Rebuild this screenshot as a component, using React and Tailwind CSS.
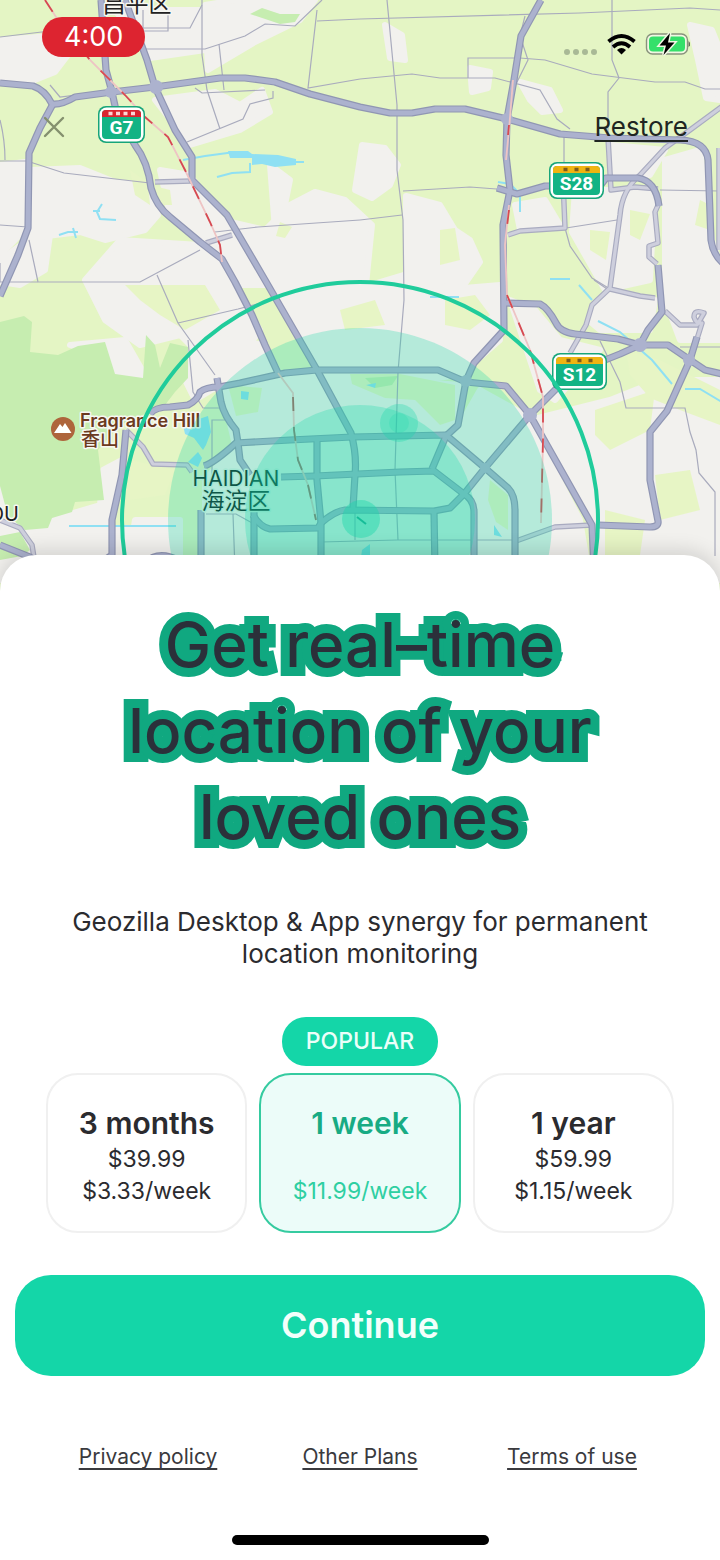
import { useState } from 'react';

const plans = [
  { id: 'quarter', title: '3 months', price: '$39.99', weekly: '$3.33/week' },
  { id: 'week', title: '1 week', price: '', weekly: '$11.99/week', popular: true },
  { id: 'year', title: '1 year', price: '$59.99', weekly: '$1.15/week' },
];

const footerLinks = ['Privacy policy', 'Other Plans', 'Terms of use'];

// Motorways and ring roads
const highways = [
  'M0 83L33 86Q45 90 52 104Q62 105 75 97L112 92L155 87L220 78L245 78L275 82L310 94L360 107L390 113H412L435 109H465L507 119L560 134L610 138L680 140Q706 141 708 160L711 240Q713 255 724 264',
  'M54 102L40 128L29 153L28 228L18 255L0 296',
  'M101 0L106 70L112 92L117 115L135 145Q148 162 151 188Q156 206 170 217L200 242L222 259L235 282L252 315L265 345L278 373',
  'M125 0L147 60L155 87L175 130L192 157V180L227 215L265 280L317 370L351 433Q357 455 355 475L353 508',
  'M541 0L521 36L514 80L507 119L506 155L510 190L503 225L504 330L474 363L466 381L458 425L446 436L432 469',
  'M150 414Q155 407 170 407L188 405Q198 400 200 392Q206 387 219 387L240 383L285 373L317 370H438L466 382L506 386L530 415L592 525L594 570',
  'M530 415L558 387L590 366L620 354L640 345L668 345L690 360L705 370L722 374',
  'M217 378L221 402Q224 416 236 430L238 443L240 460L250 475',
  'M204 466Q214 463 236 443L290 440L352 437L446 435L485 468L508 488Q515 495 515 510V570',
  'M281 477L315 476L400 472L434 471L464 494Q474 500 474 512V570',
  'M530 415L485 468L464 494L450 508L434 511L345 510Q335 511 321 523L318 528L270 529Q260 527 253 515',
  'M317 441V480L321 523V570',
  'M254 510V570',
  'M434 511L435 570',
  'M201 510V570',
  'M126 430L122 475L112 520V555L90 570',
  'M145 563Q158 550 178 560',
  'M504 303L540 304Q548 308 556 323Q560 332 575 334L618 339L640 345L648 330L662 312L658 265',
  'M497 188L517 194L545 186H600L606 178H638Q656 181 659 206',
  'M697 337L690 360L667 411L650 432L650 480L658 521Q659 527 650 527L598 525',
  'M0 545L30 557L60 580',
];

const secondary = [
  'M126 430L143 447L153 464L187 465L192 472',
  'M724 105L690 130L665 148L640 175Q622 190 620 215L610 288L592 305L586 325L570 353',
  'M608 138L611 190L635 187L658 189',
  'M508 235L520 231L565 228L563 180',
  'M659 203L655 212L658 243L649 246V257L657 264',
  'M610 289L640 296L655 298',
  'M665 311L680 325H697L704 313Q694 309 694 317Q696 324 702 323L697 339',
  'M516 541L555 527L592 525',
  'M719 148V250',
  'M155 182L192 181',
  'M206 243L232 235',
  'M0 520L20 528L32 545L36 570',
];

const streets = [
  'M0 37L75 28H190L202 5M143 10V31H168V12',
  'M145 49L205 49L245 36L265 24L295 26L322 0',
  'M202 0V55L207 90L220 129M219 44L224 90M195 88L202 93L265 90M273 91V98L250 104L243 119L187 142',
  'M317 10L308 88L360 79M317 21L360 19',
  'M0 161H27L64 173L150 183M0 225L28 227M29 240L38 282',
  'M0 282H140L200 250M157 275L178 323L215 375M178 323L238 309L261 303M188 340L193 392L203 408H220',
  'M215 232L258 227L360 220',
  'M387 0L397 105L397 170L403 220L404 300L398 372L395 470L398 540',
  'M360 19L580 13L690 8L720 10',
  'M360 79L412 74L440 78H495L540 90L557 119L570 129',
  'M468 78V58H520L545 60L592 74L655 82H685L705 89H720M525 16L520 36L528 60L516 84',
  'M612 0V60L619 78L608 92V140M403 191L470 187L510 190M660 190L720 191',
  'M360 220L402 215M564 136V178M566 228L617 220M565 228L570 246L592 278L610 289',
  'M600 341L620 382L626 408H685L690 432L696 450L699 473L715 492V556',
  'M594 280L610 291M680 347H720',
  'M212 485V420H233M206 514L236 514L254 524M233 514L235 570',
  'M321 542L397 540L515 540M355 510V540',
  'M50 85L60 97L107 91M0 120Q5 140 5 160M0 263V282',
];

const land = [
  'M0 40L50 36L68 55L55 72L30 82H0Z',
  'M115 10H200L205 50L150 58Z',
  'M205 5L235 0H315L300 20L255 42L208 70Z',
  'M155 100L215 92L240 105L262 90L270 112L240 130L190 145Z',
  'M0 165L25 162V230L0 255Z',
  'M30 170L80 168L115 182L148 185L158 215L145 230L105 240L80 232L30 238Z',
  'M160 170L190 175L222 220L265 230L290 205L315 192L345 200L372 225L366 285H235L200 240L170 215Z',
  'M270 165L290 180L285 205L300 225L275 230Z',
  'M28 240L50 235L45 270L20 285L0 282V260Z',
  'M120 240L200 245L230 282L260 330L225 380L180 335L140 345L105 320L85 280Z',
  'M265 280L370 285L420 270L440 290L500 285V340L460 375L420 380L320 370Z',
  'M385 25L402 35L405 60L390 58Z',
  'M470 68L490 72L488 88L472 92Z',
  'M520 82L550 90L560 110L542 112L530 100Z',
  'M690 25L712 30L720 50V100L706 98L698 60Z',
  'M362 145L385 148L398 165L390 185L372 198L355 190Z',
  'M406 196L440 205L455 230L470 240L480 262L462 288L430 285L406 300Z',
  'M515 205L545 200L560 225L520 230Z',
  'M612 145L665 150L650 175L615 178Z',
  'M575 190L655 190L650 280L605 290L572 232Z',
  'M665 160L700 150L712 240L720 265V340L680 340L665 300Z',
  'M510 300L535 310L560 340L600 350L555 400L540 390Z',
  'M530 420L610 400L660 380L720 380V580H600L590 520Z',
  'M610 290L655 300L650 330L600 330L588 320Z',
  'M125 340L145 375V378L115 376L100 355L70 345Z',
  'M103 470L122 460L112 520V580H30L50 520L100 505Z',
  'M135 520L180 520V580H125Z',
  'M0 485H12L8 512L40 530H140V580H0Z',
  'M200 335L265 345L280 375L220 385L195 400L180 370Z',
  'M222 390L285 376L320 374L460 385L460 425L480 390L525 415L580 520L590 580H205V480L235 445Z',
];

const grass = [
  'M125 285H205L220 310L185 330L160 315L140 300Z',
  'M130 170L148 183L150 205L135 195Z',
  'M280 222L292 227L285 238L276 236Z',
  'M445 300L475 295L490 315L470 330L445 325Z',
  'M595 410L655 390L650 430L610 450L595 435Z',
  'M655 475L690 470L700 510L660 520Z',
  'M605 510L645 520L640 555L605 560Z',
  'M440 230L455 228L460 260L440 265Z',
  'M590 230L610 232L606 260L590 250Z',
  'M630 210L650 214L640 240L630 235Z',
  'M700 200L710 205V230L695 225Z',
  'M626 350L660 360L720 390V425L680 410L650 398L630 375Z',
  'M150 185L170 190L172 205L158 205Z',
  'M340 310L375 300L385 325L345 330Z',
  'M130 460L175 470L165 495L130 500Z',
  'M350 374H400L455 385V420L440 425L415 400L385 398L352 384Z',
  'M228 385L262 388L258 412L236 416Z',
  'M490 480L508 495V530L496 522L488 500Z',
];

const woods = [
  'M0 322L24 316L32 322L30 352L58 355L78 346L105 342L115 374L143 378L146 335L155 345L160 368L170 343L188 347V378L175 392L165 405L120 425L98 450L104 500L75 502L72 512L52 518L48 528L25 530L8 516L0 486Z',
  'M250 14L262 8L280 14L300 14L295 22L280 24Z',
  'M0 536L20 532L30 550L22 556L0 560Z',
  'M365 378L398 376L392 385L375 388Z',
];

function RoadBadge({ x, y, width, code, top, marks, dash }) {
  return (
    <g transform={`translate(${x} ${y})`}>
      <rect width={width} height="37" rx="8" fill="#17a57a" />
      <rect x="1.5" y="1.5" width={width - 3} height="34" rx="7" fill="#fff" />
      <rect x="4" y="4" width={width - 8} height="29" rx="4" fill="#13b384" />
      <path d={`M4 11V8Q4 4 8 4H${width - 8}Q${width - 4} 4 ${width - 4} 8V11Z`} fill={top} />
      <path d={`M${width / 2 - 13} 7.5H${width / 2 + 14}`} stroke={marks} strokeWidth="3.5" strokeDasharray={dash} />
      <text x={width / 2} y="28" textAnchor="middle" fontSize="19" className="fill-white font-[Roboto,sans-serif] font-bold">
        {code}
      </text>
    </g>
  );
}

function MapView() {
  return (
    <svg viewBox="0 0 720 591" className="col-start-1 row-start-1 block h-auto w-full" aria-hidden="true">
      <rect width="720" height="591" fill="#e4f5c4" />
      <g fill="#f2f1ee" stroke="#f2f1ee" strokeWidth="6" strokeLinejoin="round">
        {land.map((d) => <path key={d} d={d} />)}
      </g>
      <g fill="#e7f5c5">{grass.map((d) => <path key={d} d={d} />)}</g>
      <g fill="#c6edb0">{woods.map((d) => <path key={d} d={d} />)}</g>

      {/* Lakes and canals */}
      <g fill="#8fe0f3">
        <path d="M228 151H248L252 154L278 155L296 159V165L275 167L262 164L252 165V158H230Z" />
        <path d="M183 425L192 430L196 420L208 416L211 432L206 445L203 450L194 438L185 434Z" />
        <path d="M188 462L198 452L202 458L198 467Z" />
        <path d="M241 391L249 392L248 400L241 399Z" />
        <path d="M366 385L376 383L375 388ZM494 535V525L502 537Z" />
        <path d="M362 550L370 544V565H360Z" />
      </g>
      <g fill="none" stroke="#8fe0f3" strokeWidth="2">
        <path d="M183 160L205 156L235 152M217 177L232 173L250 172V163M296 162H304M102 204L97 212L100 219L116 220M93 211H100M59 235L68 232H78M73 228L76 238" />
        <path d="M69 526H176M430 297H459M579 285L592 300M598 321L620 332L652 360L672 384M685 389H700L722 402M550 279H570M498 182L510 184L520 194V212" />
      </g>

      <g fill="none" stroke="#a9abbd" strokeWidth="1.2">{streets.map((d) => <path key={d} d={d} />)}</g>
      <g fill="none" stroke="#a9abc0" strokeWidth="5.5" strokeLinejoin="round">{secondary.map((d) => <path key={d} d={d} />)}</g>
      <g fill="none" stroke="#cecfdd" strokeWidth="3.2" strokeLinejoin="round">{secondary.map((d) => <path key={d} d={d} />)}</g>
      <g fill="none" stroke="#9096b3" strokeWidth="7.2" strokeLinejoin="round">{highways.map((d) => <path key={d} d={d} />)}</g>
      <g fill="none" stroke="#acb2ce" strokeWidth="4.8" strokeLinejoin="round">{highways.map((d) => <path key={d} d={d} />)}</g>
      <g fill="#acb2ce">
        <circle cx="111" cy="92" r="6" />
        <circle cx="156" cy="87" r="7" />
        <circle cx="507" cy="119" r="6" />
        <circle cx="530" cy="415" r="7" />
        <circle cx="640" cy="345" r="7" />
        <circle cx="689" cy="360" r="6" />
        <circle cx="466" cy="381" r="6" />
        <circle cx="485" cy="468" r="5" />
      </g>

      {/* Railways */}
      <g fill="none" strokeWidth="1.8">
        <g stroke="#eec4c4">
          <path d="M45 0L58 20L90 60L125 95L145 117L168 137L185 170L210 222L220 245L222 262" />
          <path d="M513 80L509 130L506 160M509 205L505 245L507 295L530 350L543 397V440L541 523" />
          <path d="M278 373L293 393L294 430L298 460L308 485L316 520" />
        </g>
        <g stroke="#d64a52" strokeDasharray="14 16">
          <path d="M45 0L58 20L90 60L125 95L145 117L168 137L185 170L210 222L220 245L222 262" />
          <path d="M509 125L508 135M509 210L506 235M507 295L530 350L543 397V440L541 523" />
          <path d="M293 397L294 430L298 460L308 485L316 520" stroke="#a8635f" />
        </g>
      </g>

      <g stroke="#f7f7f2" strokeWidth="3" strokeLinejoin="round" className="[paint-order:stroke]">
        <text x="137" y="12" textAnchor="middle" fontSize="23" fill="#222" className="font-['Noto_Sans_CJK_SC',sans-serif]">昌平区</text>
        <text x="19" y="521" textAnchor="end" fontSize="20" fill="#222" className="font-[Inter,sans-serif]">OU</text>
        <g stroke="#dceee4">
          <text x="236" y="486" textAnchor="middle" fontSize="21" fill="#0c2624" className="font-[Inter,sans-serif]">HAIDIAN</text>
          <text x="236" y="509" textAnchor="middle" fontSize="23" fill="#0c2624" className="font-['Noto_Sans_CJK_SC',sans-serif]">海淀区</text>
        </g>
        <text x="80" y="427" fontSize="18" fill="#6b3a20" className="font-[Inter,sans-serif] font-semibold">Fragrance Hill</text>
        <text x="81" y="446" fontSize="19" fill="#6b3a20" className="font-['Noto_Sans_CJK_SC',sans-serif] font-medium">香山</text>
      </g>
      <circle cx="63" cy="429" r="12" fill="#ae653c" />
      <path d="M54 433L60 424L62.5 427L65 423L71.5 433Z" fill="#fff" />

      <RoadBadge x={98} y={106} width={47} code="G7" top="#d9252f" marks="#fbd5d5" dash="4 3.5" />
      <RoadBadge x={549} y={162} width={55} code="S28" top="#f0b412" marks="#7c5a1c" dash="4 7" />
      <RoadBadge x={552} y={353} width={55} code="S12" top="#f0b412" marks="#7c5a1c" dash="4 7" />

      {/* Location radar */}
      <g fill="#14d6a8">
        <circle cx="360" cy="520" r="192" fillOpacity="0.27" />
        <circle cx="360" cy="520" r="115" fillOpacity="0.28" />
        <circle cx="399" cy="423" r="19" fillOpacity="0.3" />
        <circle cx="399" cy="423" r="10" fillOpacity="0.2" />
        <circle cx="361" cy="519" r="19" fillOpacity="0.4" />
      </g>
      <path d="M357 517L366 524" stroke="#16bd98" strokeWidth="2" />
      <circle cx="360" cy="520" r="238" fill="none" stroke="#20cc9b" strokeWidth="4" />
    </svg>
  );
}

function StatusIcons() {
  return (
    <svg width="130" height="26" viewBox="0 0 130 26" aria-hidden="true">
      <g fill="#a9b996">
        <circle cx="7" cy="20" r="3" />
        <circle cx="16" cy="20" r="3" />
        <circle cx="25" cy="20" r="3" />
        <circle cx="34" cy="20" r="3" />
      </g>
      <g fill="none" stroke="#000" strokeWidth="3.8">
        <path d="M48.5 9.5Q61.5 -1.5 74.5 9.5" />
        <path d="M53 15Q61.5 7.5 70 15" />
      </g>
      <path d="M57 18Q61.5 14 66 18L61.5 22.5Z" fill="#000" />
      <rect x="86.5" y="2" width="41" height="20" rx="6" fill="#f0f7e2" stroke="#88927c" strokeWidth="1.4" />
      <rect x="89" y="4.5" width="36" height="15" rx="4" fill="#35e06a" />
      <path d="M128.5 9Q132 12 128.5 15Z" fill="#68715e" />
      <path d="M110 1L99.5 13.5H106L103.5 23L114.5 10.5H108Z" fill="#000" stroke="#f0f7e2" strokeWidth="3" className="[paint-order:stroke]" />
    </svg>
  );
}

function PlanCard({ plan, selected, onSelect }) {
  return (
    <div className="flex flex-1 flex-col items-center gap-[7px]">
      {plan.popular && (
        <span className="rounded-3xl bg-[#14d6a8] px-6 py-2 text-[23px] leading-[33px] font-medium text-[#eafff9]">POPULAR</span>
      )}
      <button
        type="button"
        aria-pressed={selected}
        onClick={onSelect}
        className={`w-full rounded-[32px] border-2 pt-8 pb-6 text-center text-[23px] leading-8 ${
          selected ? 'border-[#35cba0] bg-[#ecfcf9] text-[#2fcfa2]' : 'border-[#f0f0f0] bg-white text-[#2b2b2f]'
        }`}
      >
        <span className={`mb-1 block text-[30px] leading-8 font-semibold ${selected ? 'text-[#18ab84]' : ''}`}>{plan.title}</span>
        <span className="block h-8">{plan.price}</span>
        <span className="block">{plan.weekly}</span>
      </button>
    </div>
  );
}

export default function App() {
  const [selected, setSelected] = useState('week');

  return (
    <div className="min-h-screen bg-white font-[Inter,sans-serif] text-[#2b2b2f]">
      <header className="grid overflow-hidden">
        <MapView />
        <div className="z-10 col-start-1 row-start-1">
          <div className="flex items-start justify-between pt-[17px] pr-[30px] pl-[42px]">
            <span className="rounded-full bg-[#dd2430] px-[22px] text-[27px] leading-10 text-white">4:00</span>
            <div className="pt-[15px]"><StatusIcons /></div>
          </div>
          <div className="flex items-center justify-between pt-[49px] pr-8 pl-[43px]">
            <button type="button" aria-label="Close">
              <svg width="22" height="22" viewBox="0 0 22 22" fill="none" stroke="#84906e" strokeWidth="2.4" strokeLinecap="round">
                <path d="M2 2L20 20M20 2L2 20" />
              </svg>
            </button>
            <button type="button" className="text-[26px] leading-10 text-[#202522] underline decoration-2 underline-offset-4">Restore</button>
          </div>
        </div>
      </header>

      <main className="relative -mt-9 rounded-t-[36px] bg-white pt-[47px] pb-[15px] shadow-[0_-4px_20px_rgba(0,0,0,0.14)]">
        <h1 className="text-center text-[62px] leading-[86px] font-medium text-[#2b303a] [-webkit-text-stroke:18px_#10a880] [paint-order:stroke_fill] [text-shadow:0_1px_#10a880,0_-1px_#10a880]">
          Get real–time<br />location of your<br />loved ones
        </h1>

        <p className="mx-auto mt-[46px] max-w-[620px] text-center text-[26px] leading-8">
          Geozilla Desktop &amp; App synergy for permanent location monitoring
        </p>

        <div className="mt-[47px] flex items-end gap-3 px-[46px]">
          {plans.map((plan) => (
            <PlanCard key={plan.id} plan={plan} selected={selected === plan.id} onSelect={() => setSelected(plan.id)} />
          ))}
        </div>

        <div className="mt-[42px] px-[15px]">
          <button type="button" className="w-full rounded-[36px] bg-[#14d6a8] py-6 text-[36px] leading-[53px] font-semibold text-[#f2fffb]">
            Continue
          </button>
        </div>

        <nav className="mt-[65px] grid grid-cols-3 justify-items-center px-[42px] text-[21px] leading-8 text-[#3a3a3e]">
          {footerLinks.map((label) => (
            <a key={label} href="#" className="underline underline-offset-4">{label}</a>
          ))}
        </nav>

        <div className="mx-auto mt-[62px] h-[10px] w-[257px] rounded-full bg-black" />
      </main>
    </div>
  );
}
